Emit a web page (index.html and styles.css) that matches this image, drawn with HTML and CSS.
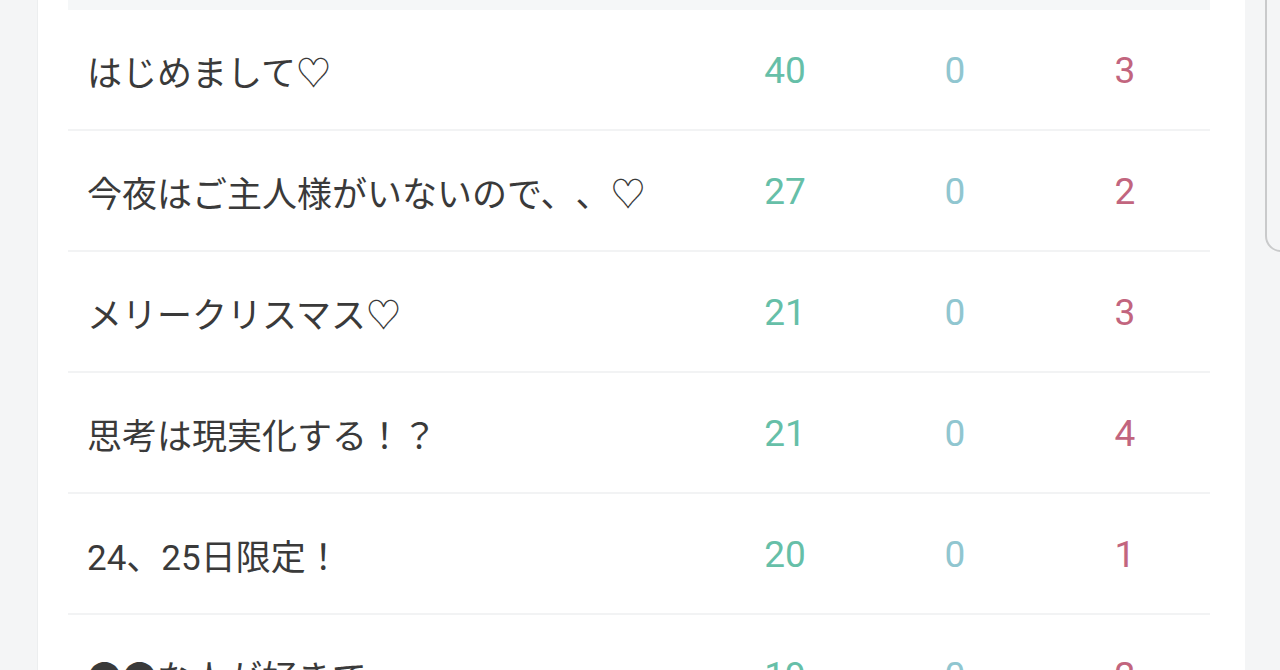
FILE: index.html
```html
<!DOCTYPE html>
<html lang="ja">
<head>
<meta charset="utf-8">
<link rel="stylesheet" href="styles.css">
</head>
<body>
<div class="page">
  <div class="gutter-left"></div>
  <div class="card">
    <div class="head-strip"></div>
    <div class="row">
      <div class="title">はじめまして♡</div>
      <div class="num pv">40</div>
      <div class="num cm">0</div>
      <div class="num lk">3</div>
    </div>
    <div class="row">
      <div class="title">今夜はご主人様がいないので、、♡</div>
      <div class="num pv">27</div>
      <div class="num cm">0</div>
      <div class="num lk">2</div>
    </div>
    <div class="row">
      <div class="title">メリークリスマス♡</div>
      <div class="num pv">21</div>
      <div class="num cm">0</div>
      <div class="num lk">3</div>
    </div>
    <div class="row">
      <div class="title">思考は現実化する！？</div>
      <div class="num pv">21</div>
      <div class="num cm">0</div>
      <div class="num lk">4</div>
    </div>
    <div class="row">
      <div class="title">24、25日限定！</div>
      <div class="num pv">20</div>
      <div class="num cm">0</div>
      <div class="num lk">1</div>
    </div>
    <div class="row">
      <div class="title">●●な人が好きで</div>
      <div class="num pv">19</div>
      <div class="num cm">0</div>
      <div class="num lk">2</div>
    </div>
  </div>
  <div class="gutter-right">
    <div class="edge"></div>
  </div>
</div>
</body>
</html>
```

FILE: styles.css
```css
html, body {
  margin: 0;
  padding: 0;
  height: 100%;
  overflow: hidden;
  background: #f4f5f6;
  font-family: Roboto, "Noto Sans CJK JP", sans-serif;
}

.page {
  display: flex;
  height: 670px;
  overflow: hidden;
}

.gutter-left {
  width: 37px;
  flex: none;
  background: #f4f5f6;
  border-right: 1px solid #eceeef;
}

.card {
  width: 1207px;
  flex: none;
  background: #ffffff;
  padding: 0 35px 0 30px;
  box-sizing: border-box;
}

.head-strip {
  height: 10px;
  background: #f5f7f8;
}

.row {
  display: grid;
  grid-template-columns: 1fr 170px 170px 170px;
  align-items: center;
  height: 119px;
  border-bottom: 2px solid #f2f3f4;
  padding-left: 19px;
}

.title {
  font-size: 35px;
  color: #3a3a3a;
  white-space: nowrap;
  text-spacing-trim: space-all;
  margin-top: 2px;
}

.num {
  font-size: 37px;
  text-align: center;
  margin-top: 2px;
}

.pv { color: #66bfa8; }
.cm { color: #90c6d0; }
.lk { color: #c2657e; }

.gutter-right {
  flex: 1;
  background: #f4f5f6;
  padding-left: 20px;
}

.edge {
  margin-top: -30px;
  width: 60px;
  height: 282px;
  box-sizing: border-box;
  border: 2px solid #c9cacb;
  border-radius: 16px;
  background: #f4f5f6;
}
```
